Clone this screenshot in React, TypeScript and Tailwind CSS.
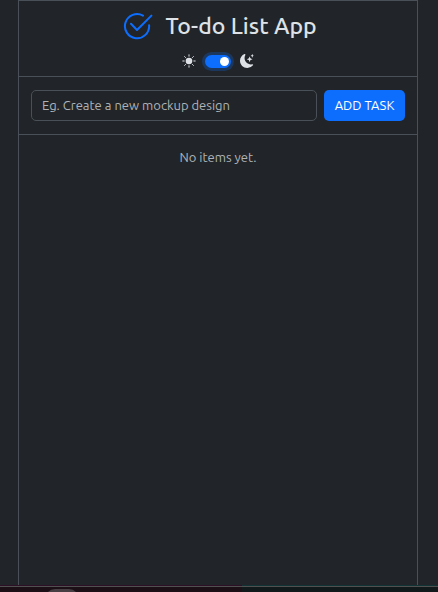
import { useState } from "react";
import { BsMoonStarsFill } from "react-icons/bs";

function Logo() {
  return (
    <svg
      viewBox="0 0 30 30"
      className="size-[30px] text-[#0d6efd]"
      fill="none"
      stroke="currentColor"
      strokeWidth="2"
      strokeLinecap="round"
      strokeLinejoin="round"
      aria-hidden="true"
    >
      <path d="M20 4.6A12.1 12.1 0 1 0 26.1 14.2" />
      <path d="M8 12.8L14 19L28.4 4.6" />
    </svg>
  );
}

function Sun() {
  return (
    <svg viewBox="0 0 14 14" className="size-3.5" stroke="currentColor" strokeLinecap="round" aria-hidden="true">
      <circle cx="7" cy="7" r="3.3" fill="currentColor" stroke="none" />
      <path d="M7 .8V2.2M7 11.8V13.2M.8 7H2.2M11.8 7H13.2M2.6 2.6L3.5 3.5M10.5 10.5L11.4 11.4M2.6 11.4L3.5 10.5M10.5 3.5L11.4 2.6" />
    </svg>
  );
}

function Header() {
  const [dark, setDark] = useState(true);
  return (
    <header className="flex h-19 flex-col items-center border-b border-[#495057] pt-[7px]">
      <div className="flex h-9 items-center justify-center gap-3 pl-1">
        <Logo />
        <h1 className="text-[23px] leading-9 font-medium whitespace-nowrap">To-do List App</h1>
      </div>
      <div className="mt-2.5 flex items-center gap-[9px]">
        <Sun />
        <input
          type="checkbox"
          role="switch"
          aria-label="Dark mode"
          checked={dark}
          onChange={(e) => setDark(e.target.checked)}
          className="h-[13px] w-[26px] appearance-none rounded-full bg-[#6c757d] p-0.5 ring-3 ring-[#0d6efd]/25 before:block before:size-[9px] before:rounded-full before:bg-white checked:bg-[#0d6efd] checked:before:ml-auto"
        />
        <BsMoonStarsFill className="size-3.5" aria-hidden="true" />
      </div>
    </header>
  );
}

function TaskForm({ onAdd }: { onAdd: (task: string) => void }) {
  const [value, setValue] = useState("");
  return (
    <form
      className="flex gap-[7px] border-b border-[#495057] px-3 py-[13px]"
      onSubmit={(e) => {
        e.preventDefault();
        if (value.trim()) {
          onAdd(value.trim());
          setValue("");
        }
      }}
    >
      <input
        type="text"
        aria-label="New task"
        placeholder="Eg. Create a new mockup design"
        value={value}
        onChange={(e) => setValue(e.target.value)}
        className="h-[31px] min-w-0 flex-1 rounded-[5px] border border-[#495057] bg-[#212529] px-2.5 pb-0.5 text-[13px] text-[#dee2e6] outline-none placeholder:text-[#afb3b7]"
      />
      <button
        type="submit"
        className="h-[31px] w-[81px] shrink-0 rounded-[5px] bg-[#0d6efd] text-[13px] whitespace-nowrap text-white"
      >
        ADD TASK
      </button>
    </form>
  );
}

function Taskbar() {
  return (
    <footer className="flex h-[7px] flex-col">
      <div className="flex h-px">
        <div className="w-[242px] bg-[#2d1026]" />
        <div className="flex-1 bg-[#123336]" />
      </div>
      <div className="h-px bg-[#505050]" />
      <div className="flex flex-1 overflow-hidden">
        <div className="w-[242px] overflow-hidden bg-[#1c0f16] pl-[45px]">
          <div className="mt-0.5 h-2.5 w-[34px] rounded-t-full bg-[#463e43]" />
        </div>
        <div className="flex-1 bg-[#12191b]" />
      </div>
    </footer>
  );
}

export default function App() {
  const [tasks, setTasks] = useState<string[]>([]);
  return (
    <div className="flex min-h-screen flex-col bg-[#212529] font-['Ubuntu','Noto_Sans',sans-serif] text-[#dee2e6]">
      <main className="mr-5 ml-[18px] flex flex-1 flex-col border border-b-0 border-[#495057]">
        <Header />
        <TaskForm onAdd={(task) => setTasks([...tasks, task])} />
        {tasks.length === 0 ? (
          <p className="mt-3 text-center text-[13px] leading-5 text-[#afb3b7]">No items yet.</p>
        ) : (
          <ul className="mt-3 px-3 text-[13px] leading-5">
            {tasks.map((task, i) => (
              <li key={i}>{task}</li>
            ))}
          </ul>
        )}
      </main>
      <Taskbar />
    </div>
  );
}
